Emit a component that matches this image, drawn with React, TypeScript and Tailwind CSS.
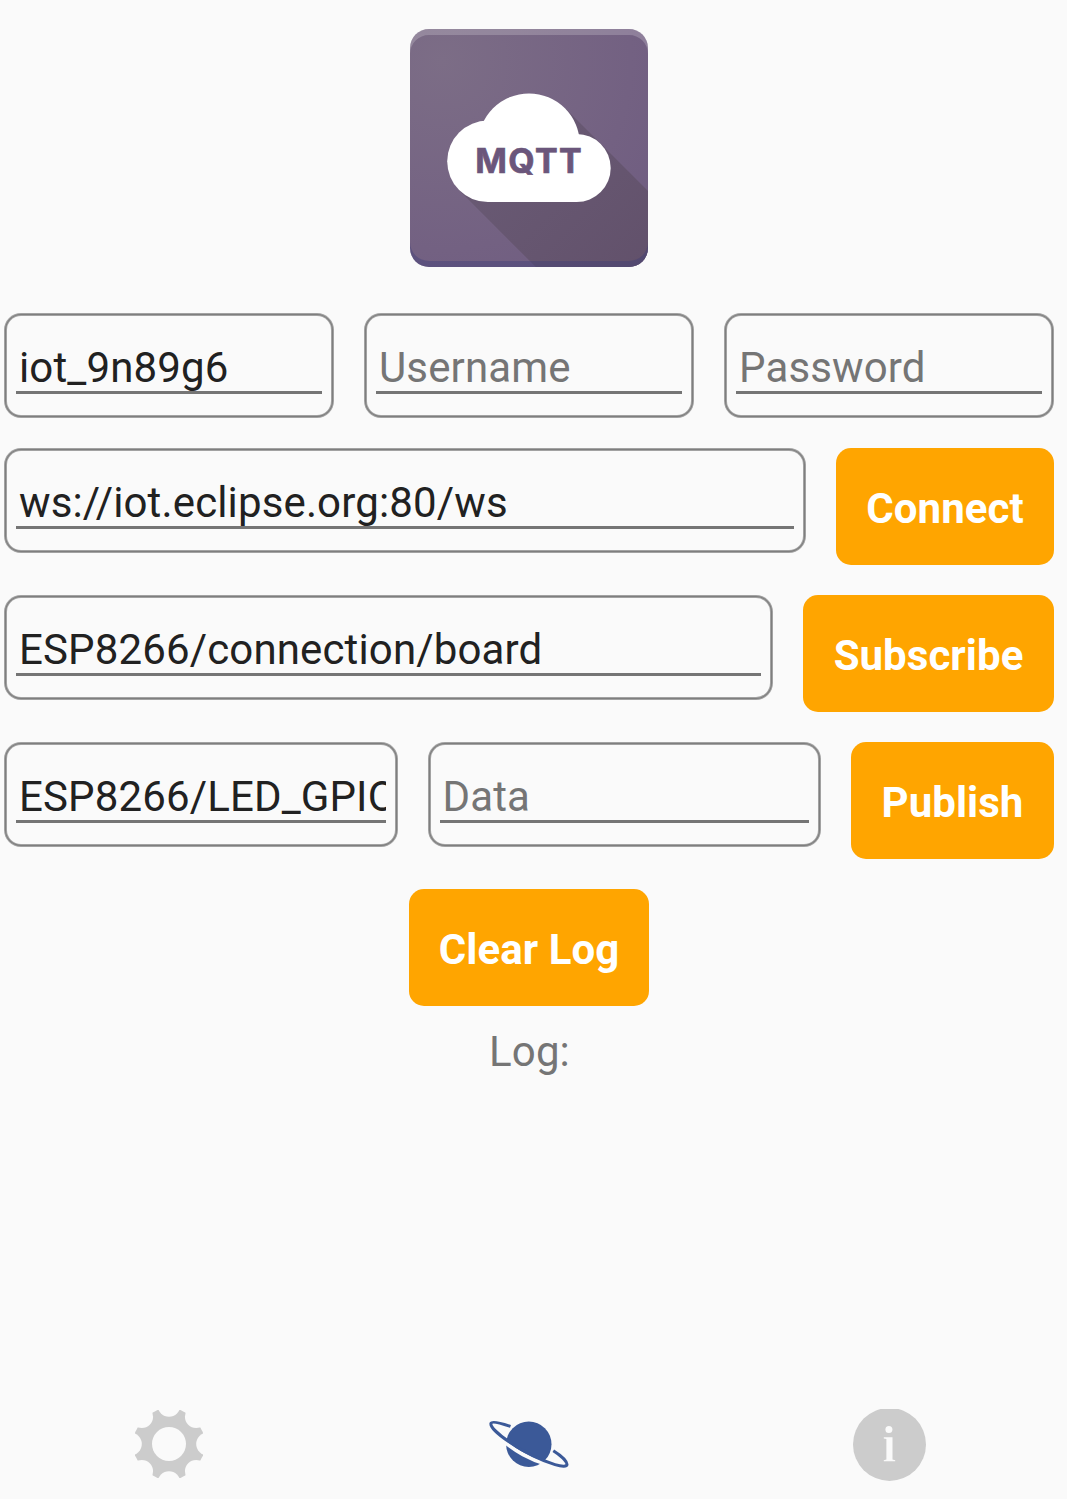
import React from "react";

function Field({ value, placeholder, className = "" }: { value?: string; placeholder?: string; className?: string }) {
  return (
    <div className={`h-[105px] min-w-0 rounded-[17px] bg-[#a2a2a2] p-px ${className}`}>
      <div className="h-full rounded-[16px] bg-[#7e7e7e] p-px">
        <div className="h-full rounded-[15px] bg-[#a2a2a2] p-px">
          <div className="h-full rounded-[14px] bg-[#fafafa] px-[9px] pt-[27px]">
            <div className="h-[51px] overflow-hidden border-b-3 border-[#757575] pl-[3px] text-[42px] leading-[49px] tracking-[0.14px] whitespace-nowrap">
              {value ? <span className="text-[#212121]">{value}</span> : <span className="text-[#757575]">{placeholder}</span>}
            </div>
          </div>
        </div>
      </div>
    </div>
  );
}

function Button({ label, className }: { label: string; className: string }) {
  return (
    <button className={`h-[117px] shrink-0 rounded-[15px] bg-[#ffa500] pt-[4px] text-center text-[42px] leading-[49px] font-bold tracking-[0.05px] whitespace-nowrap text-white ${className}`}>
      {label}
    </button>
  );
}

function Logo() {
  return (
    <svg width="238" height="238" viewBox="0 0 238 238">
      <defs>
        <radialGradient id="face" gradientUnits="userSpaceOnUse" cx="32" cy="32" r="290">
          <stop offset="0" stopColor="#7c6d86" />
          <stop offset="0.65" stopColor="#736182" />
          <stop offset="1" stopColor="#6e5b80" />
        </radialGradient>
        <linearGradient id="shade" gradientUnits="userSpaceOnUse" x1="100" y1="100" x2="238" y2="238">
          <stop offset="0" stopColor="#695a74" />
          <stop offset="1" stopColor="#62516b" />
        </linearGradient>
        <clipPath id="tile"><rect width="238" height="238" rx="19" /></clipPath>
      </defs>
      <g clipPath="url(#tile)">
        <rect width="238" height="238" fill="url(#face)" />
        <path d="M48.9 161.1 125.8 238H238V162L155 79Z" fill="url(#shade)" />
        <path d="M0 0H238V25A19 19 0 0 0 219 6H19A19 19 0 0 0 0 25Z" fill="#fff" fillOpacity="0.2" />
        <path d="M0 238H238V213A19 19 0 0 1 219 232H19A19 19 0 0 1 0 213Z" fill="#3b3c78" fillOpacity="0.4" />
      </g>
      <g fill="#fff">
        <circle cx="77.9" cy="132.3" r="40.7" />
        <circle cx="119" cy="115.2" r="50.8" />
        <circle cx="166.7" cy="139" r="34" />
        <rect x="77.7" y="130" width="89" height="43" />
      </g>
      <text x="65.3" y="143.8" letterSpacing="1.3" fontFamily="Inter, sans-serif" fontWeight="700" fontSize="34" fill="#6b567b" stroke="#6b567b" strokeWidth="0.7">MQTT</text>
    </svg>
  );
}

function Gear() {
  const notches = [0, 45, 90, 135, 180, 225, 270, 315];
  return (
    <svg width="68" height="68" viewBox="-34 -34 68 68">
      <defs>
        <mask id="teeth">
          <rect x="-34" y="-34" width="68" height="68" fill="#fff" />
          <circle r="17" fill="#000" />
          {notches.map((a) => <circle key={a} cx="0" cy="-38.5" r="11.3" fill="#000" transform={`rotate(${a})`} />)}
        </mask>
      </defs>
      <path d="M-11.5-34-17-31-31-17-34-11.5V11.5L-31 17-17 31-11.5 34H11.5L17 31 31 17 34 11.5V-11.5L31-17 17-31 11.5-34Z" fill="#ccc" mask="url(#teeth)" />
    </svg>
  );
}

function Planet() {
  return (
    <svg width="80" height="50" viewBox="0 0 80 50">
      <circle cx="39.8" cy="24.2" r="22.7" fill="#3b5998" />
      <path d="M14.5 20.8C25 30.6 42 39.8 57.5 44.2" fill="none" stroke="#fafafa" strokeWidth="3.8" />
      <path d="M21.5 6.4C12 3.2 3 1 2 3.2C.9 6.4 9 14.4 20 21.8C33 30.6 50 39.8 66 44.6C73.5 46.8 78.2 46.6 78 44.3C77.7 41 71.5 35.2 64.3 30.7" fill="none" stroke="#3b5998" strokeWidth="3" />
    </svg>
  );
}

function Info() {
  return (
    <svg width="73" height="72" viewBox="0 0 73 72">
      <circle cx="36.5" cy="35.4" r="36.5" fill="#ccc" />
      <circle cx="35.9" cy="20.4" r="3.5" fill="#fafafa" />
      <path d="M30.8 28.3H39.5V50.5L42.2 51.2V52.3H30.8V51.2L33.4 50.5V30L30.8 29.5Z" fill="#fafafa" />
    </svg>
  );
}

export default function App() {
  return (
    <div className="flex h-[1499px] w-[1067px] flex-col overflow-hidden bg-[#fafafa] pt-[29px] font-['Roboto',sans-serif]">
      <header className="flex h-[284px] justify-center pr-[9px]"><Logo /></header>
      <main className="flex flex-col gap-[30px] pr-[13px] pl-[4px]">
        <div className="grid grid-cols-3 gap-[30px]">
          <Field value="iot_9n89g6" />
          <Field placeholder="Username" />
          <Field placeholder="Password" />
        </div>
        <div className="flex gap-[30px]">
          <Field value="ws://iot.eclipse.org:80/ws" className="flex-1" />
          <Button label="Connect" className="w-[218px]" />
        </div>
        <div className="flex gap-[30px]">
          <Field value="ESP8266/connection/board" className="flex-1" />
          <Button label="Subscribe" className="w-[251px]" />
        </div>
        <div className="flex gap-[30px]">
          <Field value="ESP8266/LED_GPIO" className="flex-1" />
          <Field placeholder="Data" className="flex-1" />
          <Button label="Publish" className="w-[203px]" />
        </div>
        <div className="flex justify-center">
          <Button label="Clear Log" className="w-[240px]" />
        </div>
      </main>
      <p className="mt-[21px] pr-[8px] text-center text-[42px] leading-[49px] tracking-[0.14px] text-[#757575]">Log:</p>
      <nav className="mt-auto mb-[16px] -ml-[11px] grid h-[80px] w-[1081px] grid-cols-3 items-center justify-items-center">
        <div className="pt-[2px]"><Gear /></div>
        <div className="pt-[4px]"><Planet /></div>
        <div className="pt-[4px]"><Info /></div>
      </nav>
    </div>
  );
}
